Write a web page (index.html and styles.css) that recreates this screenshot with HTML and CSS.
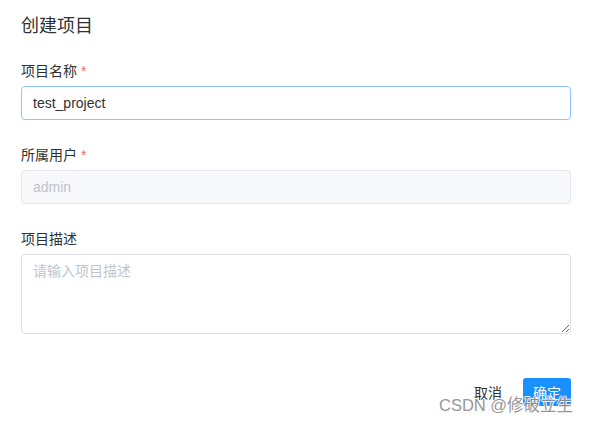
FILE: index.html
```html
<!DOCTYPE html>
<html lang="zh-CN">
  <head>
    <meta charset="UTF-8" />
    <meta name="viewport" content="width=device-width, initial-scale=1.0" />
    <title>创建项目</title>
    <link rel="stylesheet" href="styles.css">
  </head>
  <body>
    <div class="dialog">
      <h2 class="dialog-title">创建项目</h2>
      <form class="project-form">
        <div class="form-item">
          <label class="form-label is-required">项目名称</label>
          <input class="form-input is-focus" type="text" value="test_project" />
        </div>
        <div class="form-item">
          <label class="form-label is-required">所属用户</label>
          <input class="form-input" type="text" value="admin" disabled />
        </div>
        <div class="form-item">
          <label class="form-label">项目描述</label>
          <textarea class="form-textarea" placeholder="请输入项目描述"></textarea>
        </div>
        <div class="dialog-footer">
          <button type="button" class="btn btn-text">取消</button>
          <button type="submit" class="btn btn-primary">确定</button>
        </div>
      </form>
    </div>
    <div class="watermark">CSDN @修破立生</div>
  </body>
</html>
```

FILE: styles.css
```css
* {
  box-sizing: border-box;
}
body {
  margin: 0;
  background-color: #ffffff;
  font-family: "Liberation Sans", "Noto Sans CJK SC", sans-serif;
  font-size: 14px;
  color: #606266;
}
.dialog {
  padding: 14px 20px 0 21px;
}
.dialog-title {
  margin: 0 0 22px;
  font-size: 18px;
  font-weight: normal;
  line-height: 24px;
  color: #303133;
}
.form-item {
  display: flex;
  flex-direction: column;
  margin-bottom: 24px;
}
.form-label {
  line-height: 22px;
  margin-bottom: 4px;
  color: #303133;
}
.form-label.is-required::after {
  content: "*";
  color: #f56c6c;
  margin-left: 4px;
}
.form-input {
  width: 100%;
  height: 34px;
  padding: 0 11px;
  border: 1px solid #dcdfe6;
  border-radius: 4px;
  font-family: inherit;
  font-size: 14px;
  color: #303133;
  outline: none;
  background-color: #ffffff;
}
.form-input.is-focus {
  border-color: #8cc5ff;
}
.form-input:disabled {
  background-color: #f7f8fa;
  border-color: #e4e7ed;
  color: #c0c4cc;
}
.form-textarea {
  width: 100%;
  height: 80px;
  padding: 5px 11px;
  border: 1px solid #dcdfe6;
  border-radius: 4px;
  font-family: inherit;
  font-size: 14px;
  line-height: 22px;
  color: #606266;
  outline: none;
  resize: vertical;
}
.form-textarea::placeholder {
  color: #c0c4cc;
}
.dialog-footer {
  display: flex;
  justify-content: flex-end;
  align-items: center;
  gap: 9px;
  margin-top: 44px;
}
.btn {
  height: 28px;
  padding: 0 12px;
  border: none;
  border-radius: 3px;
  font-family: inherit;
  font-size: 14px;
  cursor: pointer;
}
.btn-text {
  background-color: transparent;
  color: #303133;
}
.btn-primary {
  padding: 0 10px;
  background-color: #1890ff;
  color: #ffffff;
}
.watermark {
  position: absolute;
  left: 439px;
  top: 392px;
  font-family: "Liberation Sans", "Noto Sans CJK SC", sans-serif;
  font-size: 16.5px;
  color: #8c8c8c;
  opacity: 0.9;
  text-shadow: 1px 0 #fff, -1px 0 #fff, 0 1px #fff, 0 -1px #fff;
  white-space: nowrap;
}
```
